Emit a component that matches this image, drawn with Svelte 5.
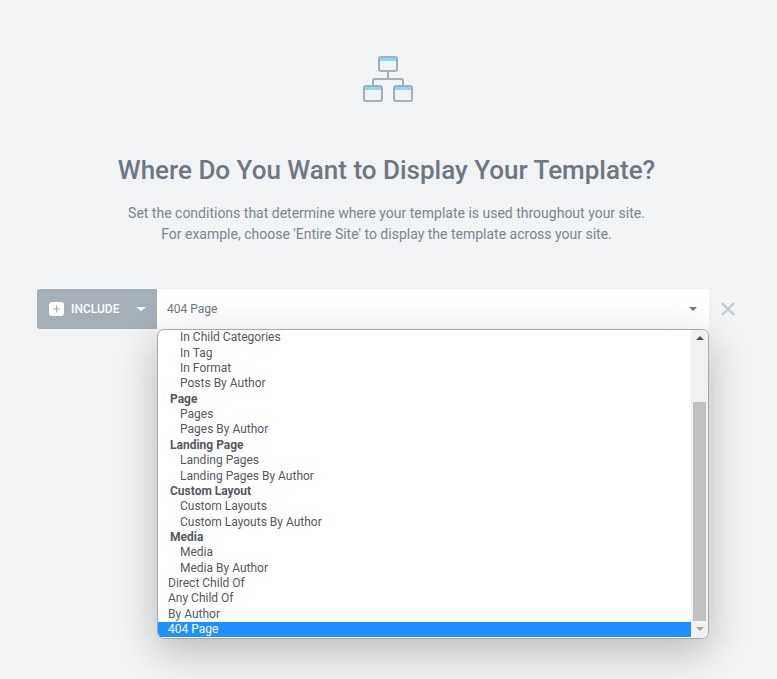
<script>
  const options = [
    { label: 'In Child Categories', kind: 'child' },
    { label: 'In Tag', kind: 'child' },
    { label: 'In Format', kind: 'child' },
    { label: 'Posts By Author', kind: 'child' },
    { label: 'Page', kind: 'group' },
    { label: 'Pages', kind: 'child' },
    { label: 'Pages By Author', kind: 'child' },
    { label: 'Landing Page', kind: 'group' },
    { label: 'Landing Pages', kind: 'child' },
    { label: 'Landing Pages By Author', kind: 'child' },
    { label: 'Custom Layout', kind: 'group' },
    { label: 'Custom Layouts', kind: 'child' },
    { label: 'Custom Layouts By Author', kind: 'child' },
    { label: 'Media', kind: 'group' },
    { label: 'Media', kind: 'child' },
    { label: 'Media By Author', kind: 'child' },
    { label: 'Direct Child Of', kind: 'top' },
    { label: 'Any Child Of', kind: 'top' },
    { label: 'By Author', kind: 'top' },
    { label: '404 Page', kind: 'top', selected: true }
  ];
</script>

<main class="page">
  <svg class="hero-icon" width="52" height="48" viewBox="0 0 52 48" fill="none">
    <rect x="17" y="2" width="18" height="14" rx="2" fill="#f1f3f5" />
    <rect x="18" y="3" width="16" height="3" fill="#86dcf7" />
    <rect x="17" y="2" width="18" height="14" rx="2" stroke="#a4afb7" stroke-width="2" />
    <rect x="3" y="32" width="16" height="3" fill="#86dcf7" />
    <rect x="2" y="31" width="18" height="15" rx="2" stroke="#a4afb7" stroke-width="2" />
    <rect x="33" y="32" width="16" height="3" fill="#86dcf7" />
    <rect x="32" y="31" width="18" height="15" rx="2" stroke="#a4afb7" stroke-width="2" />
    <path d="M26 16v8M11 31v-5a2 2 0 0 1 2-2h26a2 2 0 0 1 2 2v5" stroke="#a4afb7" stroke-width="2" />
  </svg>

  <h1>Where Do You Want to Display Your Template?</h1>
  <p class="intro">
    Set the conditions that determine where your template is used throughout your site.<br />
    For example, choose 'Entire Site' to display the template across your site.
  </p>

  <section class="condition">
    <div class="type">
      <span class="plus">
        <svg width="15" height="14" viewBox="0 0 15 14"><rect width="15" height="14" rx="3" fill="#fff" /><path d="M7.5 3.5v7M4 7h7" stroke="#a4afb7" stroke-width="1.2" /></svg>
      </span>
      <span class="type-label">INCLUDE</span>
      <span class="caret light"></span>
    </div>
    <div class="select-wrap">
      <div class="select">
        <span>404 Page</span>
        <span class="caret dark"></span>
      </div>
      <div class="menu">
        <div class="list">
          {#each options as opt}
            <div class={'row ' + opt.kind} class:selected={opt.selected}>{opt.label}</div>
          {/each}
        </div>
        <div class="scrollbar">
          <span class="arrow up"></span>
          <div class="track"><div class="thumb"></div></div>
          <span class="arrow down"></span>
        </div>
      </div>
    </div>
    <svg class="remove" width="14" height="14" viewBox="0 0 14 14"><path d="M1 1l12 12M13 1L1 13" stroke="#c2cbd2" stroke-width="2.4" /></svg>
  </section>
</main>

<style>
  :global(body) {
    margin: 0;
    background: #f1f3f5;
  }
  .page {
    height: 679px;
    overflow: hidden;
    box-sizing: border-box;
    padding-top: 55px;
    display: flex;
    flex-direction: column;
    align-items: center;
    font-family: Roboto, "Liberation Sans", sans-serif;
  }
  .hero-icon {
    display: block;
    margin-right: 1px;
  }
  h1 {
    margin: 51px 4px 0 0;
    font-size: 26px;
    line-height: 32px;
    font-weight: 500;
    color: #6d7882;
  }
  .intro {
    margin: 17px 4px 0 0;
    font-size: 14px;
    line-height: 21px;
    text-align: center;
    color: #7a8691;
  }
  .condition {
    align-self: stretch;
    margin: 44px 0 0 37px;
    display: flex;
    align-items: flex-start;
  }
  .type {
    width: 120px;
    height: 40px;
    box-sizing: border-box;
    padding: 0 12px;
    display: flex;
    align-items: center;
    background: #a4afb7;
    border-radius: 3px 0 0 3px;
    color: #fff;
    font-size: 12px;
    font-weight: 500;
  }
  .plus {
    display: flex;
    margin-right: 7px;
  }
  .caret {
    width: 0;
    height: 0;
    border-left: 5px solid transparent;
    border-right: 5px solid transparent;
  }
  .caret.light {
    margin-left: auto;
    margin-right: -1px;
    border-top: 4px solid #fff;
  }
  .caret.dark {
    margin-left: auto;
    border-left-width: 4px;
    border-right-width: 4px;
    border-top: 4px solid #6d7882;
  }
  .select-wrap {
    position: relative;
    width: 552px;
  }
  .select {
    height: 40px;
    box-sizing: border-box;
    padding: 0 12px 0 10px;
    display: flex;
    align-items: center;
    background: #fff;
    border-radius: 0 3px 3px 0;
    color: #6d7882;
    font-size: 12px;
  }
  .menu {
    position: absolute;
    top: 40px;
    left: 0;
    width: 552px;
    height: 310px;
    box-sizing: border-box;
    display: flex;
    background: #fff;
    border: 1px solid #a8a8a8;
    border-radius: 7px;
    overflow: hidden;
    box-shadow: 0 12px 40px rgba(0, 0, 0, 0.24);
  }
  .list {
    flex: 1;
    display: flex;
    flex-direction: column;
    justify-content: flex-end;
    overflow: hidden;
    font-size: 12px;
    color: #54595f;
    padding-bottom: 1px;
  }
  .row {
    flex: none;
    box-sizing: border-box;
    height: 15.37px;
    padding: 1.5px 0 0 10px;
    line-height: 13.87px;
    white-space: nowrap;
  }
  .row.group {
    padding-left: 12px;
    font-weight: 700;
  }
  .row.child {
    padding-left: 22px;
  }
  .row.selected {
    background: #1e90ff;
    color: #fff;
  }
  .scrollbar {
    width: 17px;
    flex: none;
    display: flex;
    flex-direction: column;
    align-items: center;
    background: #f1f1f1;
  }
  .arrow {
    flex: none;
    width: 0;
    height: 0;
    border-left: 4px solid transparent;
    border-right: 4px solid transparent;
  }
  .arrow.up {
    margin: 6px 0 4px;
    border-bottom: 4px solid #505050;
  }
  .arrow.down {
    margin: 6px 0 7px;
    border-top: 4px solid #a3a3a3;
  }
  .track {
    flex: 1;
    align-self: stretch;
    display: flex;
    flex-direction: column;
    justify-content: flex-end;
  }
  .thumb {
    height: 219px;
    margin: 0 2px;
    background: #c1c1c1;
  }
  .remove {
    margin: 13px 0 0 12px;
  }
</style>
